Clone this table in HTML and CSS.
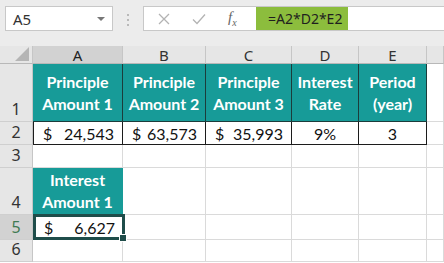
FILE: index.html
```html
<!DOCTYPE html>
<html lang="en">
<head>
    <meta charset="UTF-8">
    <meta name="viewport" content="width=device-width, initial-scale=1.0">
    <title>Interest Amount</title>
    <link rel="stylesheet" href="styles.css">
</head>
<body>
    <div class="formula-bar">
        <div class="name-box">
            <span>A5</span>
            <span class="name-arrow"></span>
        </div>
        <div class="grip">
            <span></span><span></span><span></span>
        </div>
        <div class="formula-box">
            <div class="formula-tools">
                <svg class="tool" width="12" height="12" viewBox="0 0 12 12"><path d="M1 1 L11 11 M11 1 L1 11" stroke="#b3b3b3" stroke-width="1.3" fill="none"/></svg>
                <svg class="tool" width="14" height="12" viewBox="0 0 14 12"><path d="M1 6.5 L5 10.5 L13 1.5" stroke="#b3b3b3" stroke-width="1.3" fill="none"/></svg>
                <span class="fx">f<sub>x</sub></span>
            </div>
            <div class="formula-input">
                <span class="formula-text">=A2*D2*E2</span>
            </div>
        </div>
    </div>

    <div class="sheet">
        <!-- column headers -->
        <div class="corner"><span class="corner-tri"></span></div>
        <div class="col-head active">A</div>
        <div class="col-head">B</div>
        <div class="col-head">C</div>
        <div class="col-head">D</div>
        <div class="col-head">E</div>
        <div class="col-head"></div>

        <!-- row 1 -->
        <div class="row-head">1</div>
        <div class="cell head">Principle<br>Amount 1</div>
        <div class="cell head">Principle<br>Amount 2</div>
        <div class="cell head">Principle<br>Amount 3</div>
        <div class="cell head">Interest<br>Rate</div>
        <div class="cell head">Period<br>(year)</div>
        <div class="cell"></div>

        <!-- row 2 -->
        <div class="row-head">2</div>
        <div class="cell data money"><span>$</span><span>24,543</span></div>
        <div class="cell data money"><span>$</span><span>63,573</span></div>
        <div class="cell data money"><span>$</span><span>35,993</span></div>
        <div class="cell data center">9%</div>
        <div class="cell data center">3</div>
        <div class="cell"></div>

        <!-- row 3 -->
        <div class="row-head">3</div>
        <div class="cell"></div>
        <div class="cell"></div>
        <div class="cell"></div>
        <div class="cell"></div>
        <div class="cell"></div>
        <div class="cell"></div>

        <!-- row 4 -->
        <div class="row-head">4</div>
        <div class="cell head single">Interest<br>Amount 1</div>
        <div class="cell"></div>
        <div class="cell"></div>
        <div class="cell"></div>
        <div class="cell"></div>
        <div class="cell"></div>

        <!-- row 5 -->
        <div class="row-head active">5</div>
        <div class="cell money selected"><span>$</span><span>6,627</span></div>
        <div class="cell"></div>
        <div class="cell"></div>
        <div class="cell"></div>
        <div class="cell"></div>
        <div class="cell"></div>

        <!-- row 6 -->
        <div class="row-head">6</div>
        <div class="cell"></div>
        <div class="cell"></div>
        <div class="cell"></div>
        <div class="cell"></div>
        <div class="cell"></div>
        <div class="cell"></div>
    </div>
</body>
</html>
```

FILE: styles.css
```css
* {
    margin: 0;
    padding: 0;
    box-sizing: border-box;
}

body {
    width: 444px;
    height: 263px;
    overflow: hidden;
    background: #ffffff;
    font-family: 'Lato', 'Noto Sans', sans-serif;
}

/* formula bar */
.formula-bar {
    display: flex;
    align-items: flex-start;
    height: 46px;
    padding: 6px 0 0 5px;
    background: #ececec;
}

.name-box {
    display: flex;
    align-items: center;
    justify-content: space-between;
    width: 108px;
    height: 25px;
    padding: 0 7px 0 7px;
    background: #fff;
    border: 1px solid #c8c8c8;
    font-family: 'Noto Sans', sans-serif;
    font-size: 15px;
    color: #333;
}

.name-arrow {
    width: 0;
    height: 0;
    border-left: 4px solid transparent;
    border-right: 4px solid transparent;
    border-top: 4px solid #777;
}

.grip {
    display: flex;
    flex-direction: column;
    gap: 3px;
    width: 30px;
    padding-top: 8px;
    align-items: center;
}

.grip span {
    width: 2px;
    height: 2px;
    background: #b9b9b9;
}

.formula-box {
    flex: 1;
    display: flex;
    height: 25px;
    background: #fff;
    border: 1px solid #c8c8c8;
    border-right: none;
}

.formula-tools {
    display: flex;
    align-items: center;
    width: 112px;
    padding-left: 14px;
}

.tool {
    margin-right: 22px;
}

.fx {
    font-family: 'Liberation Serif', serif;
    font-style: italic;
    font-size: 15px;
    color: #666;
}

.fx sub {
    font-size: 10px;
}

.formula-input {
    display: flex;
    align-items: stretch;
}

.formula-text {
    display: flex;
    align-items: center;
    padding: 0 12px;
    width: 92px;
    background: #8cbd3d;
    font-family: 'Noto Sans', sans-serif;
    font-size: 14px;
    color: #1f1f1f;
}

/* sheet grid */
.sheet {
    display: grid;
    grid-template-columns: 33px 90px 83px 86px 67px 68px 1fr;
    grid-template-rows: 18px 58px 23px 23px 47px 25px 22px;
}

.corner {
    position: relative;
    background: #e6e6e6;
    border-right: 1px solid #c6c6c6;
    border-bottom: 1px solid #b8b8b8;
}

.corner-tri {
    position: absolute;
    right: 3px;
    bottom: 2px;
    width: 0;
    height: 0;
    border-left: 14px solid transparent;
    border-bottom: 14px solid #b5b5b5;
}

.col-head {
    display: flex;
    align-items: center;
    justify-content: center;
    background: #e6e6e6;
    border-right: 1px solid #c6c6c6;
    border-bottom: 1px solid #b8b8b8;
    font-family: 'Noto Sans', sans-serif;
    font-size: 15px;
    color: #333;
}

.col-head.active {
    background: #d2d2d2;
    color: #222;
}

.row-head {
    display: flex;
    align-items: flex-end;
    justify-content: center;
    padding-bottom: 1px;
    background: #e6e6e6;
    border-right: 1px solid #c6c6c6;
    border-bottom: 1px solid #cfcfcf;
    font-family: 'Noto Sans', sans-serif;
    font-size: 16px;
    color: #333;
}

.row-head.active {
    background: #d2d2d2;
    color: #3f7a52;
}

.cell {
    border-right: 1px solid #dadada;
    border-bottom: 1px solid #dadada;
    font-size: 16px;
    color: #111;
}

.cell.head {
    display: flex;
    align-items: center;
    justify-content: center;
    text-align: center;
    line-height: 22px;
    background: #179b98;
    color: #fff;
    font-weight: bold;
    border-right-color: #1c3c3b;
    border-bottom-color: #1c3c3b;
}

.sheet .cell.head:nth-child(8) {
    border-left: 1px solid #1c3c3b;
}

.cell.head.single {
    border-right-color: #179b98;
    border-bottom-color: #179b98;
}

.cell.data {
    border-right-color: #1c1c1c;
    border-bottom-color: #1c1c1c;
    display: flex;
    align-items: center;
}

.cell.money {
    display: flex;
    align-items: center;
    justify-content: space-between;
    padding: 0 8px 0 9px;
}

.cell.data.money:nth-child(16) {
    border-left: 1px solid #1c1c1c;
}

.cell.center {
    justify-content: center;
}

.cell.selected {
    position: relative;
    border: 3px solid #1f4d4a;
    margin: -1px -2px 0 0;
    padding: 0 7px 0 8px;
}

.cell.selected::after {
    content: "";
    position: absolute;
    right: -5px;
    bottom: -5px;
    width: 6px;
    height: 6px;
    background: #1f4d4a;
    border: 1px solid #fff;
}
```
